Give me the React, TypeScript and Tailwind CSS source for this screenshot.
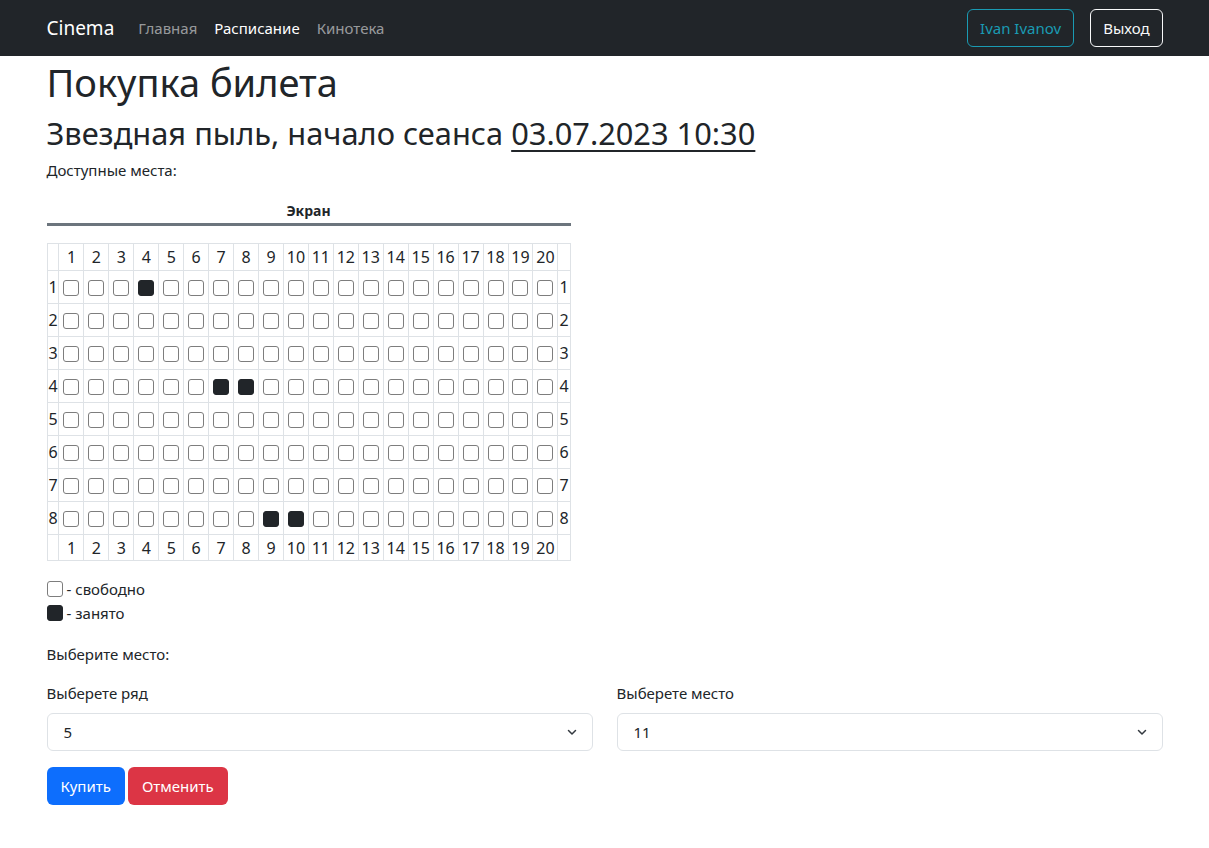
import { useState } from 'react';

const COLS = Array.from({ length: 20 }, (_, i) => i + 1);
const ROWS = Array.from({ length: 8 }, (_, i) => i + 1);

// occupied seats: row -> seat numbers
const TAKEN: Record<number, number[]> = {
  1: [4],
  4: [7, 8],
  8: [9, 10],
};

function Seat({ taken }: { taken: boolean }) {
  return (
    <span
      className={
        'inline-block h-[16px] w-[16px] rounded-[3px] border-[1.5px] align-middle ' +
        (taken ? 'border-[#212529] bg-[#212529]' : 'border-[#7d7d7d] bg-white')
      }
    />
  );
}

function Chevron() {
  return (
    <svg width="16" height="16" viewBox="0 0 16 16" fill="none">
      <path d="M4.5 6.5 8 10l3.5-3.5" stroke="#343a40" strokeWidth="1.5" strokeLinecap="round" strokeLinejoin="round" />
    </svg>
  );
}

export default function App() {
  const [row] = useState('5');
  const [seat] = useState('11');

  return (
    <div className="min-h-[848px] bg-white text-[15px] leading-[24px] text-[#212529]" style={{ fontFamily: '"Noto Sans", sans-serif' }}>
      <nav className="h-[56px] bg-[#212529]">
        <div className="mx-auto flex h-full w-[1140px] items-center px-[12px]">
          <span className="mr-[24px] text-[19px] text-white">Cinema</span>
          <div className="flex gap-[17px]">
            <span className="text-[#ffffff8c]">Главная</span>
            <span className="text-white">Расписание</span>
            <span className="text-[#ffffff8c]">Кинотека</span>
          </div>
          <div className="ml-auto flex gap-[16px]">
            <button type="button" className="h-[38px] rounded-[6px] border border-[#1a9bb3] px-[12px] text-[#1a9bb3]">
              Ivan Ivanov
            </button>
            <button type="button" className="h-[38px] rounded-[6px] border border-[#f8f9fa] px-[12px] text-[#f8f9fa]">
              Выход
            </button>
          </div>
        </div>
      </nav>

      <main className="mx-auto w-[1140px] px-[12px]">
        <h1 className="mb-[8px] pt-[2px] text-[38px] leading-[48px]">Покупка билета</h1>
        <h2 className="mb-[6px] text-[30.8px] leading-[38px]">
          Звездная пыль, начало сеанса <span className="underline decoration-[2px] underline-offset-[5px]">03.07.2023 10:30</span>
        </h2>
        <p className="mb-[16px]">Доступные места:</p>

        <div className="w-[524px]">
          <div className="pt-[2px] text-center text-[14px] font-bold leading-[22px]">Экран</div>
          <div className="mt-[1px] h-[3px] bg-[#6c757d]" />
          <table className="mt-[17px] border-collapse text-[16px]">
            <tbody>
              <tr className="h-[27px]">
                <td className="w-[12px] border border-[#dee2e6]" />
                {COLS.map((c) => (
                  <td key={c} className="w-[25px] border border-[#dee2e6] p-0 text-center">{c}</td>
                ))}
                <td className="w-[12px] border border-[#dee2e6]" />
              </tr>
              {ROWS.map((r) => (
                <tr key={r} className="h-[33px]">
                  <td className="w-[12px] border border-[#dee2e6] p-0 text-center">{r}</td>
                  {COLS.map((c) => (
                    <td key={c} className="border border-[#dee2e6] p-0 text-center leading-none">
                      <Seat taken={(TAKEN[r] || []).includes(c)} />
                    </td>
                  ))}
                  <td className="w-[12px] border border-[#dee2e6] p-0 text-center">{r}</td>
                </tr>
              ))}
              <tr className="h-[26px]">
                <td className="border border-[#dee2e6]" />
                {COLS.map((c) => (
                  <td key={c} className="border border-[#dee2e6] p-0 text-center">{c}</td>
                ))}
                <td className="border border-[#dee2e6]" />
              </tr>
            </tbody>
          </table>
        </div>

        <div className="mt-[16px]">
          <div className="flex items-center gap-[4px]">
            <Seat taken={false} />
            <span>- свободно</span>
          </div>
          <div className="flex items-center gap-[4px]">
            <Seat taken />
            <span>- занято</span>
          </div>
        </div>

        <p className="mt-[17px]">Выберите место:</p>

        <div className="mt-[15px] grid grid-cols-2 gap-x-[24px]">
          <div>
            <label className="mb-[8px] block">Выберете ряд</label>
            <div className="flex h-[38px] items-center justify-between rounded-[6px] border border-[#dee2e6] pl-[16px] pr-[12px]">
              <span>{row}</span>
              <Chevron />
            </div>
          </div>
          <div>
            <label className="mb-[8px] block">Выберете место</label>
            <div className="flex h-[38px] items-center justify-between rounded-[6px] border border-[#dee2e6] pl-[16px] pr-[12px]">
              <span>{seat}</span>
              <Chevron />
            </div>
          </div>
        </div>

        <div className="mt-[16px] flex gap-[3px]">
          <button type="button" className="h-[38px] rounded-[6px] bg-[#0d6efd] px-[14px] text-white">Купить</button>
          <button type="button" className="h-[38px] rounded-[6px] bg-[#dc3545] px-[14px] text-white">Отменить</button>
        </div>
      </main>
    </div>
  );
}
